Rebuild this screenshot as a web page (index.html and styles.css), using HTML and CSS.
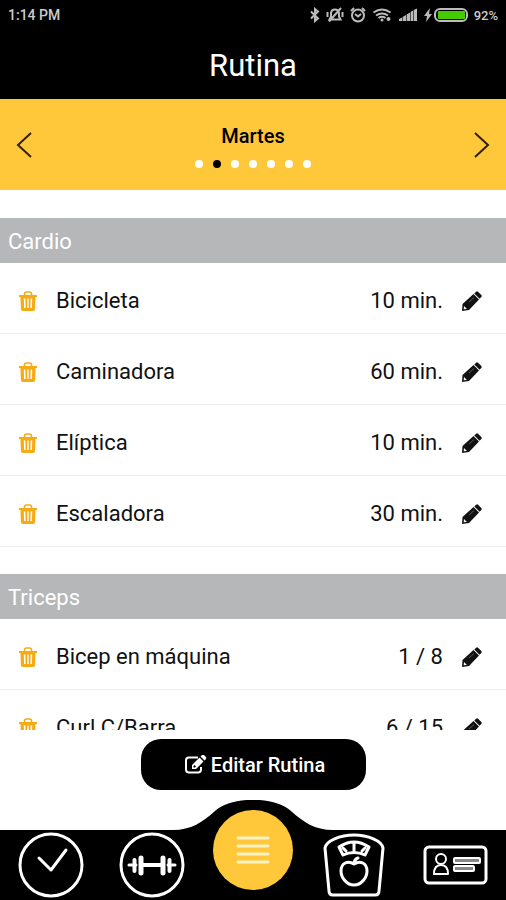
FILE: index.html
```html
<!DOCTYPE html>
<html lang="es">
<head>
<meta charset="utf-8">
<meta name="viewport" content="width=device-width, initial-scale=1">
<title>Rutina</title>
<link rel="stylesheet" href="styles.css">
</head>
<body>
<svg class="sprite" aria-hidden="true">
  <symbol id="trash" viewBox="0 0 18 20">
    <path d="M5.500 4V3Q5.500 1 7.500 1h3q2 0 2 2v1" fill="none" stroke="currentColor" stroke-width="1.600"/>
    <path d="M0 4h18v2H0z"/>
    <path fill-rule="evenodd" d="M1.400 5h15.200l-.5 13q-.1 2-2 2H3.900q-1.900 0-2-2zM4.800 7.500l.3 9.500h1.500l-.2-9.500zm3.500 0V17h1.400V7.500zm3.300 0-.2 9.500h1.500l.3-9.500z"/>
  </symbol>
  <symbol id="pencil" viewBox="0 0 20 20">
    <path fill-rule="evenodd" d="M0 20l.5-7L11.500 3l5.500 5.500L7 19zM2 15l-.3 3.300 3.300-.4z"/>
    <path d="m12.300 2.400 1.800-1.700q1-.8 2 0l3.200 3.200q.8 1 0 2l-1.700 1.800z"/>
    <path d="m7 11 5-4.500" stroke="#888" stroke-width=".6"/>
  </symbol>
</svg>
<div class="app">
  <header class="top">
    <div class="status">
      <span class="time">1:14 PM</span>
      <div class="status-icons">
        <svg width="10" height="16" viewBox="0 0 10 16"><path d="m1 4.500 7 7L5 14V2l3 2.500-7 7"/></svg>
        <svg width="18" height="16" viewBox="0 0 18 16"><path d="M3.500 12.500h11L13 9.500V6q-.5-3.500-4-3.500T5 6v3.500zM3 14.500 15 1M1.500 5v5M16.500 5v5"/></svg>
        <svg width="16" height="16" viewBox="0 0 16 16"><circle cx="8" cy="8.500" r="6"/><path d="M5 7l3 2.500L11 7M1 4l3-3M15 4l-3-3"/></svg>
        <svg width="20" height="16" viewBox="0 0 20 16"><path d="M1.500 5.500Q10-.5 18.500 5.500M4 8.500q6-4 12 0M6.500 11q3.500-2.500 7 0"/><circle class="solid" cx="10" cy="13" r="1.500"/><circle class="solid" cx="16.500" cy="12" r="2"/></svg>
        <svg width="20" height="16" viewBox="0 0 20 16"><path class="solid" d="M1 14v-2l3-1.500V14zM4.600 14v-4L8 8v6zM8.600 14V7.500L12 5.500V14zM12.600 14V5L15 3.500V14zM15.600 14V3L19 1.500V14z"/></svg>
        <svg class="bolt" width="8" height="16" viewBox="0 0 8 16"><path class="solid" d="M6 1 0 9h3l-1 6 6-8H5z"/></svg>
        <svg width="34" height="16" viewBox="0 0 34 16"><rect x="1" y="2" width="32" height="12" rx="5"/><rect class="charge" x="4" y="4" width="27" height="8" rx="1"/></svg>
        <span>92%</span>
      </div>
    </div>
    <h1>Rutina</h1>
  </header>

  <nav class="days" aria-label="Día">
    <button type="button" class="arrow" aria-label="Anterior"><svg width="16" height="28" viewBox="0 0 16 28"><path d="M15 2 2 14l13 12"/></svg></button>
    <div class="day">
      <h2>Martes</h2>
      <div class="dots"><i></i><i class="on"></i><i></i><i></i><i></i><i></i><i></i></div>
    </div>
    <button type="button" class="arrow" aria-label="Siguiente"><svg width="16" height="28" viewBox="0 0 16 28"><path d="m1 2 13 12L1 26"/></svg></button>
  </nav>

  <main class="routine">
    <section>
      <h3>Cardio</h3>
      <ul>
        <li><button type="button" class="remove" aria-label="Eliminar"><svg><use href="#trash"/></svg></button><span class="name">Bicicleta</span><span>10 min.</span><button type="button" class="edit" aria-label="Editar"><svg><use href="#pencil"/></svg></button></li>
        <li><button type="button" class="remove" aria-label="Eliminar"><svg><use href="#trash"/></svg></button><span class="name">Caminadora</span><span>60 min.</span><button type="button" class="edit" aria-label="Editar"><svg><use href="#pencil"/></svg></button></li>
        <li><button type="button" class="remove" aria-label="Eliminar"><svg><use href="#trash"/></svg></button><span class="name">Elíptica</span><span>10 min.</span><button type="button" class="edit" aria-label="Editar"><svg><use href="#pencil"/></svg></button></li>
        <li><button type="button" class="remove" aria-label="Eliminar"><svg><use href="#trash"/></svg></button><span class="name">Escaladora</span><span>30 min.</span><button type="button" class="edit" aria-label="Editar"><svg><use href="#pencil"/></svg></button></li>
      </ul>
    </section>
    <section>
      <h3>Triceps</h3>
      <ul>
        <li><button type="button" class="remove" aria-label="Eliminar"><svg><use href="#trash"/></svg></button><span class="name">Bicep en máquina</span><span>1 / 8</span><button type="button" class="edit" aria-label="Editar"><svg><use href="#pencil"/></svg></button></li>
        <li><button type="button" class="remove" aria-label="Eliminar"><svg><use href="#trash"/></svg></button><span class="name">Curl C/Barra</span><span>6 / 15</span><button type="button" class="edit" aria-label="Editar"><svg><use href="#pencil"/></svg></button></li>
      </ul>
    </section>
  </main>

  <div class="action">
    <button type="button" class="primary">
      <svg width="24" height="20" viewBox="0 0 24 20"><path d="M14 2.500H5Q2 2.500 2 5.500v9q0 3 3 3h9q3 0 3-3V12" fill="none" stroke="currentColor" stroke-width="2"/><path fill="currentColor" fill-rule="evenodd" d="M8 14v-4l7.500-7.500 4 4L12 14zM9.500 11v1.500H11l1-1-1.500-1.500zM16.500 1.500 18 0q1-.6 2 0l2 2q.6 1 0 2l-1.500 1.500z"/></svg>
      Editar Rutina
    </button>
  </div>

  <nav class="tabs" aria-label="Principal">
    <svg class="hump" width="160" height="32" viewBox="0 0 160 32" aria-hidden="true"><path d="M0 32v-2C18 30 30 22 42 11 58-4 102-4 118 11c12 11 24 19 42 19v2z"/></svg>
    <a href="#" aria-label="Historial"><svg width="66" height="66" viewBox="0 0 66 66"><circle cx="33" cy="33" r="31"/><path d="m21 26 12 12 15-20"/></svg></a>
    <a href="#" aria-label="Ejercicios"><svg width="66" height="66" viewBox="0 0 66 66"><circle cx="33" cy="33" r="31"/><path d="M10 33h7M49 33h7" stroke-width="3"/><path d="M22 33h22M15.500 28v11M50.500 28v11" stroke-width="4"/><path d="M22 26v15M44 26v15" stroke-width="5"/></svg></a>
    <a href="#" class="home" aria-label="Rutina"><svg width="34" height="30" viewBox="0 0 34 30"><path d="M2 3h30M2 11h30M2 19h30M2 27h30"/></svg></a>
    <a href="#" aria-label="Peso"><svg width="64" height="66" viewBox="0 0 64 66"><path d="M3 16C4 9 18 3 32 3s28 6 29 13l-4 43q0 4-4 4H11q-4 0-4-4z"/><path d="M17 15q15-10 30 0l-4 8q-11-5-22 0zM32 19v-7M21 16l3 3M43 16l-3 3"/><path d="M32 32c-6-4-13-1-13 7 0 7 6 14 13 14s13-7 13-14c0-8-7-11-13-7 0-3 1-5 4-6"/></svg></a>
    <a href="#" aria-label="Perfil"><svg width="66" height="66" viewBox="0 0 66 66"><rect x="3" y="15" width="61" height="36" rx="4"/><circle cx="19" cy="27" r="5" stroke-width="2"/><path d="M12 42q0-9 7-9t7 9z" stroke-width="2"/><rect x="32" y="26" width="26" height="5" rx="1" stroke-width="2" fill="#888"/><rect x="32" y="34" width="20" height="5" rx="1" stroke-width="2" fill="#888"/></svg></a>
  </nav>
</div>
</body>
</html>
```
FILE: styles.css
```css
* { box-sizing: border-box; }
body { margin: 0; font-family: Roboto, "Noto Sans", sans-serif; color: #111; background: #fff; }
h1, h2, h3, ul { margin: 0; padding: 0; font-weight: 400; }
button { border: 0; padding: 0; background: none; font: inherit; color: inherit; cursor: pointer; }
svg { display: block; flex: none; }
.sprite { position: absolute; width: 0; height: 0; }
.app { display: flex; flex-direction: column; height: 100vh; }

.top { flex: none; height: 99px; background: #000; color: #fff; }
.status { display: flex; align-items: center; justify-content: space-between; height: 30px; padding: 0 8px; font-size: 13px; font-weight: 500; color: #ccc; }
.time { font-size: 14px; }
.status-icons { display: flex; align-items: center; gap: 6px; }
.status-icons svg { fill: none; stroke: #bbb; stroke-width: 2; }
.status-icons .solid { fill: #bbb; stroke: none; }
.status-icons .bolt { margin-right: -4px; }
.status-icons .charge { fill: #4c0; stroke: none; }
h1 { font-size: 31px; line-height: 72px; text-align: center; }

.days { flex: none; display: flex; align-items: center; justify-content: space-between; height: 91px; padding: 0 16px; background: #ffc83a; color: #000; }
.arrow svg { fill: none; stroke: #301f00; stroke-width: 2; }
.day h2 { font-size: 20px; font-weight: 500; line-height: 28px; text-align: center; }
.dots { display: flex; gap: 10px; padding-top: 10px; }
.dots i { width: 8px; height: 8px; border-radius: 50%; background: #fff; }
.dots .on { background: #000; }

.routine { flex: 1; min-height: 0; overflow: hidden; }
section { padding-top: 28px; }
section + section { padding-top: 27px; }
h3 { height: 45px; padding-left: 8px; background: #b5b7b9; color: #fff; font-size: 22px; line-height: 47px; }
li { display: flex; align-items: center; height: 71px; padding: 5px 24px 0 19px; border-bottom: 1px solid #eee; font-size: 22px; }
.name { flex: 1; }
.remove { padding-right: 19px; color: #f5ab14; }
.remove svg { width: 18px; height: 20px; fill: currentColor; }
.edit { padding-left: 19px; color: #111; }
.edit svg { width: 20px; height: 20px; fill: currentColor; }

.action { flex: none; display: flex; justify-content: center; align-items: flex-start; height: 100px; padding-top: 9px; }
.primary { display: flex; align-items: center; justify-content: center; gap: 3px; width: 225px; height: 51px; padding-left: 3px; border-radius: 20px; background: #000; color: #fff; font-size: 20px; font-weight: 500; }

.tabs { position: relative; flex: none; display: grid; grid-template-columns: repeat(5, 1fr); justify-items: center; align-items: center; height: 70px; background: #000; }
.tabs svg { fill: none; stroke: #fff; stroke-width: 3; stroke-linecap: round; stroke-linejoin: round; }
.tabs .hump { position: absolute; left: 50%; top: -30px; margin-left: -80px; fill: #000; stroke: none; }
.tabs .home { position: relative; display: flex; align-items: center; justify-content: center; width: 80px; height: 80px; margin: -30px 0 0; border-radius: 50%; background: #ffc83a; }
.home svg { stroke: #fff2c4; }
```
